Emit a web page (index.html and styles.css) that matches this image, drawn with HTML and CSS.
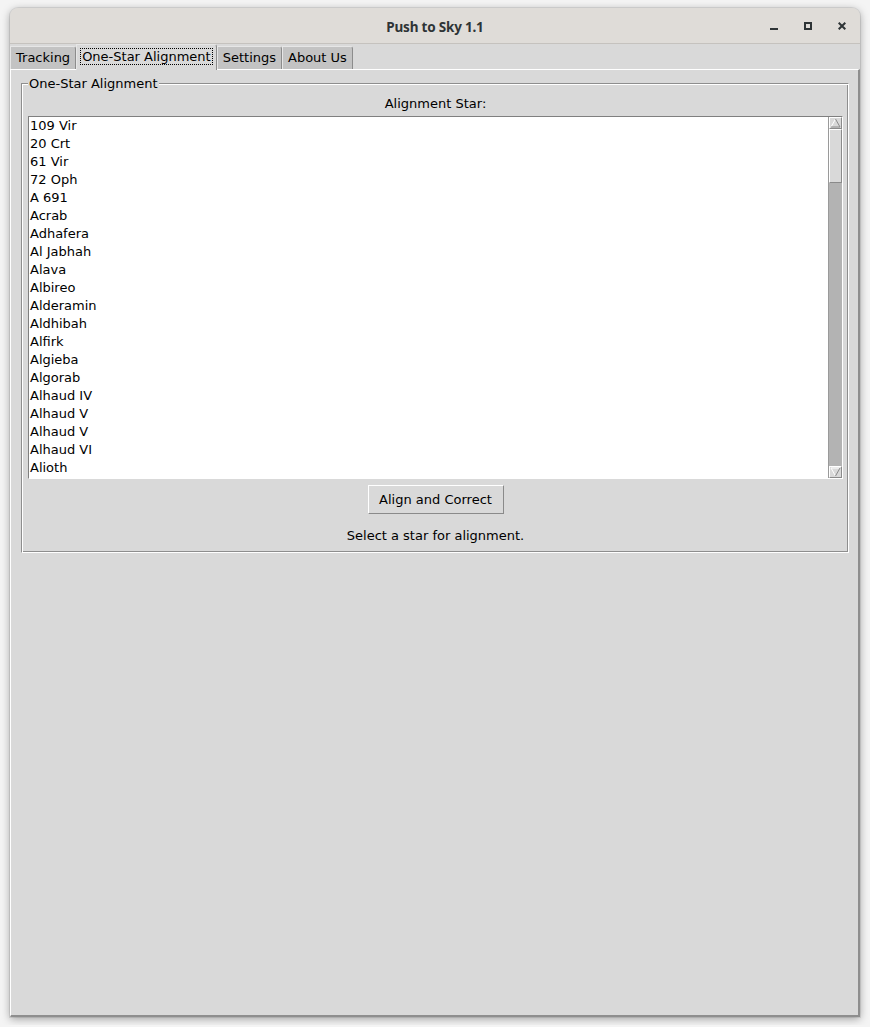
FILE: index.html
```html
<!DOCTYPE html>
<html>
<head>
<meta charset="utf-8">
<title>Push to Sky 1.1</title>
<link rel="stylesheet" href="styles.css">
</head>
<body>
<div class="window">
  <div class="titlebar">
    <span class="title">Push to Sky 1.1</span>
    <div class="controls">
      <span class="ctl"><svg width="8" height="8" viewBox="0 0 8 8"><rect x="0" y="6" width="8" height="2" fill="#2e3436"/></svg></span>
      <span class="ctl"><svg width="8" height="8" viewBox="0 0 8 8"><rect x="1" y="1" width="6" height="6" fill="none" stroke="#2e3436" stroke-width="2"/></svg></span>
      <span class="ctl"><svg width="8" height="8" viewBox="0 0 8 8"><path d="M0.7 0.7 L7.3 7.3 M7.3 0.7 L0.7 7.3" stroke="#2e3436" stroke-width="2"/></svg></span>
    </div>
  </div>
  <div class="notebook">
    <div class="tabs">
      <span class="tab">Tracking</span>
      <span class="tab active"><span class="focus">One-Star Alignment</span></span>
      <span class="tab">Settings</span>
      <span class="tab">About Us</span>
    </div>
    <div class="pane">
      <fieldset class="group">
        <legend>One-Star Alignment</legend>
        <div class="caption">Alignment Star:</div>
        <div class="listwrap">
          <ul class="list">
            <li>109 Vir</li>
            <li>20 Crt</li>
            <li>61 Vir</li>
            <li>72 Oph</li>
            <li>A 691</li>
            <li>Acrab</li>
            <li>Adhafera</li>
            <li>Al Jabhah</li>
            <li>Alava</li>
            <li>Albireo</li>
            <li>Alderamin</li>
            <li>Aldhibah</li>
            <li>Alfirk</li>
            <li>Algieba</li>
            <li>Algorab</li>
            <li>Alhaud IV</li>
            <li>Alhaud V</li>
            <li>Alhaud V</li>
            <li>Alhaud VI</li>
            <li>Alioth</li>
          </ul>
          <div class="sb">
            <div class="arrow"><svg width="11" height="10" viewBox="0 0 11 10"><polygon points="5.5,1 10,9 1,9" fill="#d9d9d9"/><path d="M5.5 1 L1 9" stroke="#fff" stroke-width="1"/><path d="M5.5 1 L10 9 L1 9" fill="none" stroke="#8a8a8a" stroke-width="1"/></svg></div>
            <div class="slider"></div>
            <div class="trough"></div>
            <div class="arrow"><svg width="11" height="10" viewBox="0 0 11 10"><polygon points="1,1 10,1 5.5,9" fill="#d9d9d9"/><path d="M1 1 L10 1 M1 1 L5.5 9" stroke="#fff" stroke-width="1"/><path d="M10 1 L5.5 9" stroke="#8a8a8a" stroke-width="1"/></svg></div>
          </div>
        </div>
        <button class="btn">Align and Correct</button>
        <div class="status">Select a star for alignment.</div>
      </fieldset>
    </div>
  </div>
</div>
</body>
</html>
```
FILE: styles.css
```css
html, body {
  margin: 0;
}
body {
  padding: 8px 10px;
  background: #f4f4f4;
  font-family: "DejaVu Sans", sans-serif;
  font-size: 13px;
  color: #000;
}
.window {
  width: 850px;
  height: 1009px;
  display: flex;
  flex-direction: column;
  background: #d9d9d9;
  border-radius: 8px 8px 0 0;
  box-shadow: 0 2px 8px rgba(0,0,0,0.35), 0 0 0 1px rgba(0,0,0,0.08);
  overflow: hidden;
}
.titlebar {
  height: 35px;
  flex: none;
  border-bottom: 1px solid #c5c2be;
  background: #dfdcd8;
  display: grid;
  grid-template-columns: 1fr auto 1fr;
  align-items: center;
}
.title {
  grid-column: 2;
  font-family: "Noto Sans", sans-serif;
  font-weight: 700;
  font-size: 13.5px;
  color: #2e3436;
  letter-spacing: -0.2px;
  padding-top: 2px;
}
.controls {
  grid-column: 3;
  justify-self: end;
  display: flex;
  gap: 10px;
  padding-right: 6px;
}
.ctl {
  width: 24px;
  height: 24px;
  display: flex;
  align-items: center;
  justify-content: center;
}
.notebook {
  flex: 1;
  display: flex;
  flex-direction: column;
}
.tabs {
  height: 25px;
  flex: none;
  display: flex;
  align-items: flex-end;
}
.tab {
  box-sizing: border-box;
  height: 23px;
  line-height: 22px;
  padding: 0 5px;
  border: 1px solid;
  border-bottom: none;
  border-color: #e6e6e6 #8c8c8c transparent #e6e6e6;
  border-top-right-radius: 3px;
  background: #c3c3c3;
  white-space: nowrap;
}
.tab.active {
  height: 26px;
  line-height: 24px;
  background: #d9d9d9;
  margin-bottom: -1px;
  position: relative;
  z-index: 1;
  padding: 0 4px;
}
.focus {
  outline: 1px dotted #000;
  outline-offset: 0;
  padding: 0 1px;
}
.pane {
  flex: 1;
  border-top: 1px solid #fff;
  border-left: 1px solid #fff;
  border-right: 2px solid #8e8e8e;
  border-bottom: 2px solid #8e8e8e;
  padding: 6px 9px 0 10px;
}
.group {
  margin: 0;
  padding: 5px 5px 8px 6px;
  border: 1px solid;
  border-color: #8e8e8e #fff #fff #8e8e8e;
  box-shadow: inset 1px 1px 0 #fff, inset -1px -1px 0 #8e8e8e;
  min-width: 0;
}
.group legend {
  padding: 0 1px;
  margin-left: 0;
  line-height: 15px;
  background: #d9d9d9;
}
.caption {
  text-align: center;
  line-height: 16px;
  margin-bottom: 4px;
}
.listwrap {
  display: flex;
  height: 363px;
  box-sizing: border-box;
  border: 1px solid;
  border-color: #7f7f7f #fff #fff #7f7f7f;
  background: #fff;
}
.list {
  flex: 1;
  margin: 0;
  padding: 0 0 0 1px;
  list-style: none;
  overflow: hidden;
}
.list li {
  height: 18px;
  line-height: 18px;
  white-space: nowrap;
}
.sb {
  flex: none;
  display: flex;
  flex-direction: column;
  background: #b3b3b3;
  border-left: 1px solid #9a9a9a;
  box-sizing: border-box;
  width: 14px;
}
.arrow {
  height: 12px;
  flex: none;
  box-sizing: border-box;
  border: 1px solid;
  border-color: #fff #8a8a8a #8a8a8a #fff;
  background: #d9d9d9;
  display: flex;
  align-items: center;
  justify-content: center;
}
.slider {
  height: 54px;
  flex: none;
  box-sizing: border-box;
  border: 1px solid;
  border-color: #fff #8a8a8a #8a8a8a #fff;
  background: #d9d9d9;
}
.trough {
  flex: 1;
}
.btn {
  display: block;
  margin: 6px auto 0;
  width: 136px;
  height: 29px;
  box-sizing: border-box;
  border: 1px solid;
  border-color: #fff #8a8a8a #8a8a8a #fff;
  background: #d9d9d9;
  font-family: "DejaVu Sans", sans-serif;
  font-size: 13px;
  color: #000;
  padding: 0;
}
.status {
  text-align: center;
  line-height: 16px;
  margin-top: 14px;
}
```
